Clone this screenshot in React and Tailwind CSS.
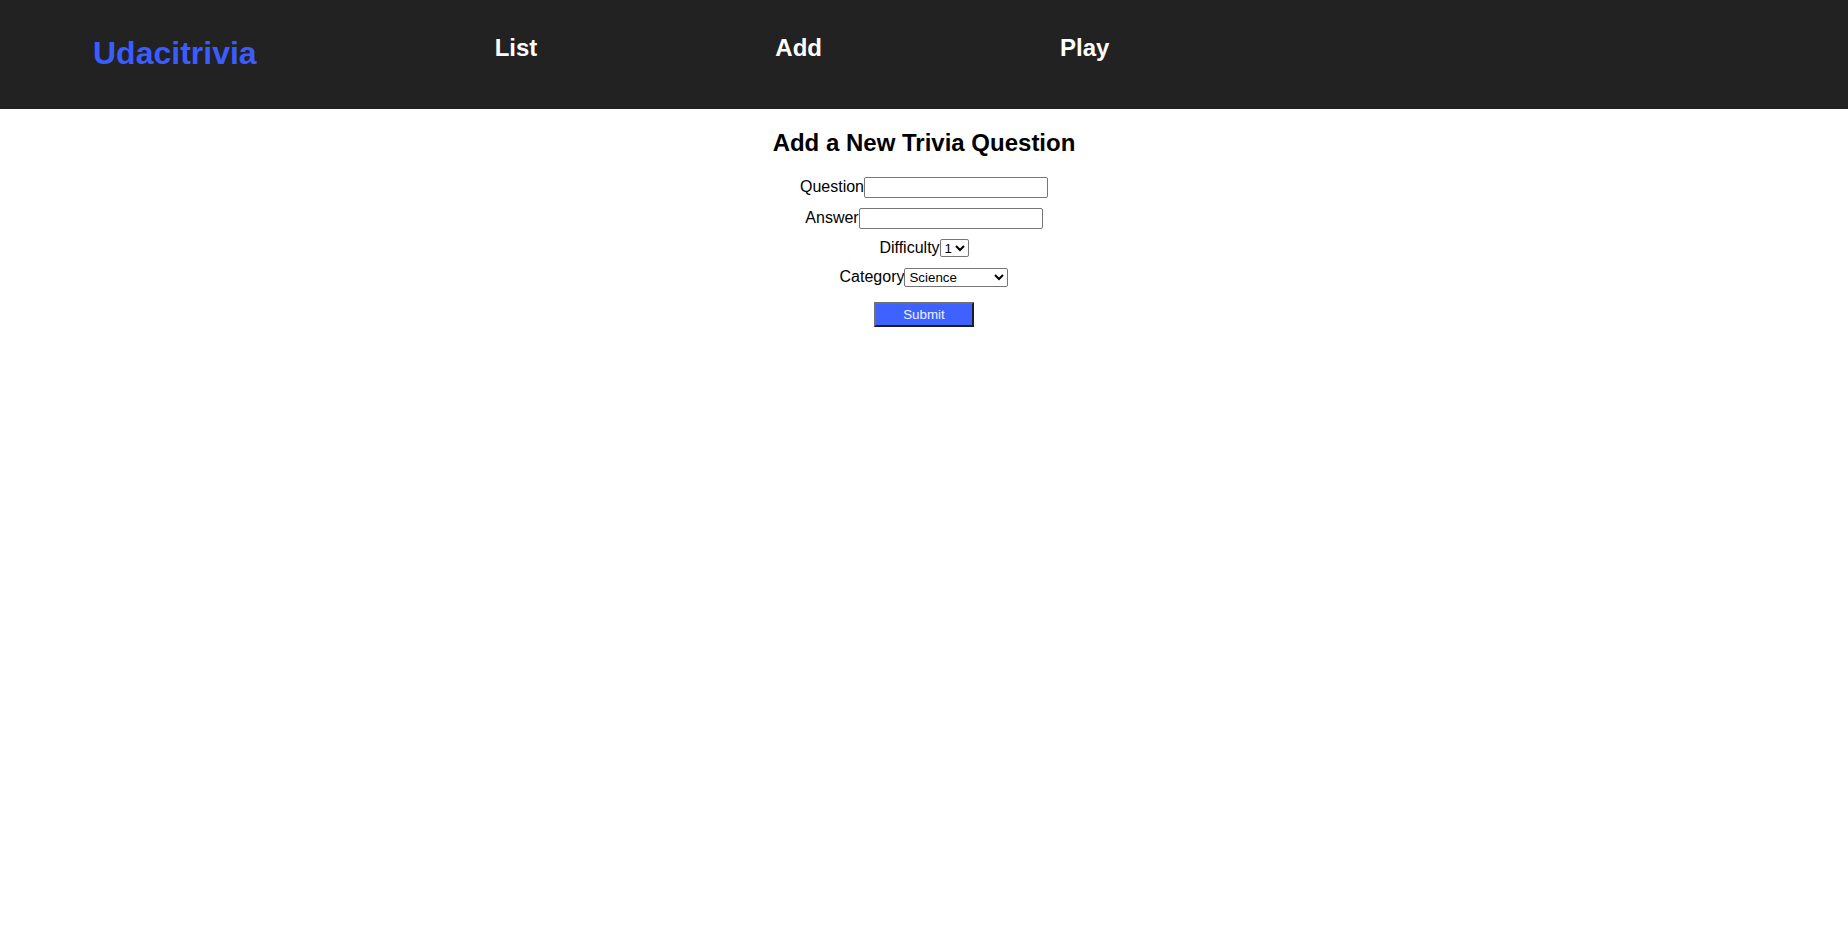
import { useState } from 'react';

const categories = ['Science', 'Art', 'Geography', 'History', 'Entertainment', 'Sports'];

function Header() {
  return (
    <div className="h-[109px] bg-[#222222] flex items-start pt-[34px] pl-[93px] gap-[238px]">
      <h1 className="mt-[1px] text-[32px] leading-[37px] font-bold text-[#3b5cff] cursor-pointer">Udacitrivia</h1>
      <h2 className="text-[24px] leading-[28px] font-bold text-white cursor-pointer">List</h2>
      <h2 className="text-[24px] leading-[28px] font-bold text-white cursor-pointer">Add</h2>
      <h2 className="text-[24px] leading-[28px] font-bold text-white cursor-pointer">Play</h2>
    </div>
  );
}

export default function App() {
  const [question, setQuestion] = useState('');
  const [answer, setAnswer] = useState('');
  const [difficulty, setDifficulty] = useState('1');
  const [category, setCategory] = useState('Science');

  return (
    <div className="min-h-screen bg-white text-black font-['Liberation_Sans',Arial,sans-serif]">
      <Header />
      <div className="flex flex-col items-center">
        <h2 className="mt-[20px] text-[24px] leading-[28px] font-bold">Add a New Trivia Question</h2>
        <form
          className="flex flex-col items-center text-[16px] leading-[18px]"
          onSubmit={(e) => e.preventDefault()}
        >
          <label className="mt-[20px] flex items-baseline">
            Question
            <input
              type="text"
              value={question}
              onChange={(e) => setQuestion(e.target.value)}
              className="w-[184px] h-[21px] px-[2px] text-[13.33px] border border-[#767676] rounded-[2px]"
            />
          </label>
          <label className="mt-[10px] flex items-baseline">
            Answer
            <input
              type="text"
              value={answer}
              onChange={(e) => setAnswer(e.target.value)}
              className="w-[184px] h-[21px] px-[2px] text-[13.33px] border border-[#767676] rounded-[2px]"
            />
          </label>
          <label className="mt-[10px] flex items-baseline">
            Difficulty
            <select
              value={difficulty}
              onChange={(e) => setDifficulty(e.target.value)}
              className="w-[29px] h-[18px] text-[13.33px] border border-[#767676] rounded-[2px] bg-white"
            >
              {['1', '2', '3', '4', '5'].map((d) => (
                <option key={d} value={d}>{d}</option>
              ))}
            </select>
          </label>
          <label className="mt-[11px] flex items-baseline">
            Category
            <select
              value={category}
              onChange={(e) => setCategory(e.target.value)}
              className="w-[104px] h-[19px] text-[13.33px] border border-[#767676] rounded-[2px] bg-white"
            >
              {categories.map((c) => (
                <option key={c} value={c}>{c}</option>
              ))}
            </select>
          </label>
          <button
            type="submit"
            className="mt-[15px] w-[100px] h-[25px] text-[13.33px] leading-[16px] bg-[#3d62ff] text-[#eef1ff] border-2 border-t-[#707070] border-l-[#707070] border-r-[#1e1e1e] border-b-[#1e1e1e]"
          >
            Submit
          </button>
        </form>
      </div>
    </div>
  );
}
